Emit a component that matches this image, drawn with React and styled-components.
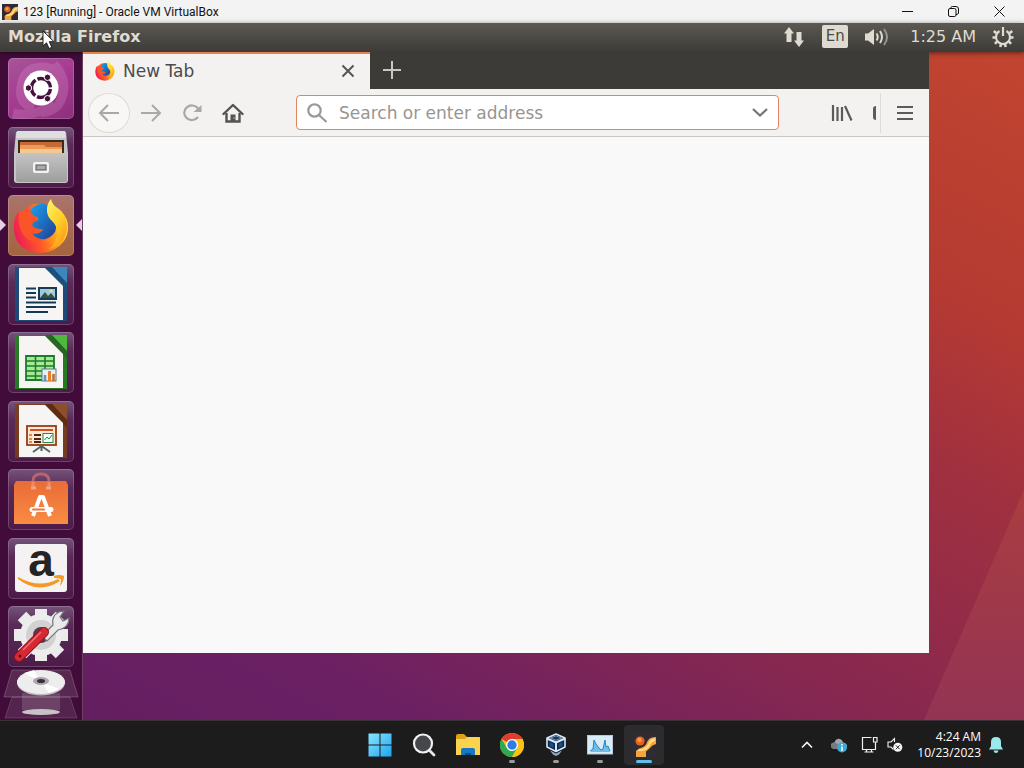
import React from "react"
import styled, { createGlobalStyle, css } from "styled-components"

const ubuntuFont = `"DejaVu Sans", "Noto Sans", sans-serif`
const windowsFont = `"Open Sans", "Noto Sans", sans-serif`

function App() {
  return (
    <>
      <GlobalStyle />
      <Page>
        <VmTitleBar />
        <UnityPanel />
        <Desktop>
          <Launcher />
          <FirefoxWindow />
        </Desktop>
        <Taskbar />
      </Page>
    </>
  )
}

export default App

function VmTitleBar() {
  return (
    <TitleBar>
      <VmIcon size={16} />
      <VmTitle>123 [Running] - Oracle VM VirtualBox</VmTitle>
      <WindowButton aria-label="Minimize">
        <svg width="11" height="11" viewBox="0 0 11 11" stroke="#111" fill="none">
          <path d="M0 5.500H11" />
        </svg>
      </WindowButton>
      <WindowButton aria-label="Restore">
        <svg width="11" height="11" viewBox="0 0 11 11" stroke="#111" fill="none">
          <rect x="0.5" y="2.5" width="7.5" height="8" rx="1.5" />
          <path d="M2.800 2.500V1.800Q3 .5 4.500 .5H8Q10.500 .5 10.500 3V7Q10.400 8.400 8 8.600" />
        </svg>
      </WindowButton>
      <WindowButton aria-label="Close">
        <svg width="11" height="11" viewBox="0 0 11 11" stroke="#111" fill="none">
          <path d="M.5 .5L10.500 10.500M10.500 .5L.5 10.500" />
        </svg>
      </WindowButton>
    </TitleBar>
  )
}

function UnityPanel() {
  return (
    <Panel>
      <AppName>Mozilla Firefox</AppName>
      <Indicators>
        <PanelButton aria-label="Network">
          <svg width="24" height="22" viewBox="0 0 24 22" fill="#dfdbd2">
            <path d="M7 1L12 7.500H9.500V16H4.500V7.500H2Z" />
            <path d="M17 21L12 14.500H14.500V6H19.500V14.500H22Z" />
          </svg>
        </PanelButton>
        <PanelButton aria-label="Keyboard layout">
          <Language>En</Language>
        </PanelButton>
        <PanelButton aria-label="Sound">
          <svg width="26" height="20" viewBox="0 0 26 20" fill="none" stroke="#dfdbd2" strokeWidth="2">
            <path d="M1 6.500H4L10 2V18L4 13.500H1Z" fill="#dfdbd2" stroke="none" />
            <path d="M12.500 6.500Q15 10 12.500 13.500" />
            <path d="M16 4Q20 10 16 16" />
            <path d="M20 2Q26 10 20 18" stroke="#98958d" />
          </svg>
        </PanelButton>
        <PanelClock>1:25 AM</PanelClock>
        <PanelButton aria-label="System">
          <svg width="22" height="22" viewBox="0 0 22 22" fill="none" stroke="#dfdbd2">
            <path d="M7.500 5A7 7 0 1 0 14.500 5" strokeWidth="2.200" />
            <path d="M11 1V10" strokeWidth="2.200" />
            <path
              d="M4.500 7.200L1.800 5M3.500 11.500H.5M5 15.500L3 17.800M9 18L8.300 21M13 18L13.700 21M17 15.500L19 17.800M18.500 11.500H21.500M17.500 7.200L20.200 5"
              strokeWidth="2.600"
            />
          </svg>
        </PanelButton>
      </Indicators>
      <Pointer width="13" height="20" viewBox="0 0 13 20">
        <path
          d="M1 1V16L4.500 12.800L7 18.500L9.800 17.300L7.300 11.700H12Z"
          fill="#fff"
          stroke="#222"
        />
      </Pointer>
    </Panel>
  )
}

const launcherItems = [
  { name: "Search your computer", tone: "dash", icon: <DashIcon /> },
  { name: "Files", icon: <FilesIcon /> },
  { name: "Firefox", tone: "firefox", running: true, icon: <FirefoxTile /> },
  {
    name: "LibreOffice Writer",
    icon: <OfficeIcon dark="#14507f" mid="#1b4f7c" light="#3c87bb"><WriterPage /></OfficeIcon>,
  },
  {
    name: "LibreOffice Calc",
    icon: <OfficeIcon dark="#1f8a1c" mid="#2a6424" light="#4cba3c"><CalcPage /></OfficeIcon>,
  },
  {
    name: "LibreOffice Impress",
    icon: <OfficeIcon dark="#7c3f18" mid="#5e2c12" light="#8b4f2e"><ImpressPage /></OfficeIcon>,
  },
  { name: "Ubuntu Software", icon: <SoftwareIcon /> },
  { name: "Amazon", icon: <AmazonIcon /> },
  { name: "System Settings", icon: <SettingsIcon /> },
]

function Launcher() {
  return (
    <LauncherBar>
      <LauncherList>
        {launcherItems.map((item) => (
          <LauncherItem key={item.name} $running={item.running}>
            <LauncherTile $tone={item.tone} aria-label={item.name}>
              {item.icon}
            </LauncherTile>
          </LauncherItem>
        ))}
      </LauncherList>
      <FoldedTile aria-label="Disc">
        <DiscIcon />
      </FoldedTile>
    </LauncherBar>
  )
}

function FirefoxWindow() {
  return (
    <Browser>
      <TabStrip>
        <Tab>
          <FirefoxLogo size={20} />
          <TabTitle>New Tab</TabTitle>
          <IconButton $width={20} aria-label="Close tab">
            <svg width="14" height="14" viewBox="0 0 14 14" stroke="#555" strokeWidth="2" fill="none">
              <path d="M1.500 1.500L12.500 12.500M12.500 1.500L1.500 12.500" />
            </svg>
          </IconButton>
        </Tab>
        <NewTabButton aria-label="New tab">
          <svg width="18" height="18" viewBox="0 0 18 18" stroke="#c9c8c5" strokeWidth="2" fill="none">
            <path d="M9 0V18M0 9H18" />
          </svg>
        </NewTabButton>
      </TabStrip>
      <Toolbar>
        <BackButton aria-label="Back">
          <svg width="22" height="20" viewBox="0 0 22 20" stroke="#aaa8a6" strokeWidth="2" fill="none">
            <path d="M21 10H2M10 2L2 10L10 18" />
          </svg>
        </BackButton>
        <IconButton $width={42} aria-label="Forward">
          <svg width="22" height="20" viewBox="0 0 22 20" stroke="#aaa8a6" strokeWidth="2" fill="none">
            <path d="M1 10H20M12 2L20 10L12 18" />
          </svg>
        </IconButton>
        <IconButton $width={40} aria-label="Reload">
          <svg width="20" height="18" viewBox="0 0 20 18" stroke="#aaa8a6" strokeWidth="2.200" fill="none">
            <path d="M16 4.500A7.600 7.300 0 1 0 16 13" />
            <path d="M19.500 1V8H11.500Z" fill="#aaa8a6" stroke="none" />
          </svg>
        </IconButton>
        <IconButton $width={42} aria-label="Home">
          <svg width="22" height="20" viewBox="0 0 22 20" stroke="#555350" fill="none">
            <path d="M1.500 11L11 2L20.500 11" strokeWidth="2.400" strokeLinejoin="round" strokeLinecap="round" />
            <path d="M4.500 10V18.500H17.500V10" strokeWidth="2.400" />
            <path d="M8.500 18V11.500H13.500V18Z" fill="#555350" stroke="none" />
            <path d="M11.500 15H12.500" stroke="#fff" />
          </svg>
        </IconButton>
        <AddressBar>
          <svg width="22" height="20" viewBox="0 0 22 20" stroke="#9a9997" strokeWidth="2.200" fill="none">
            <circle cx="8.500" cy="7.500" r="6.200" />
            <path d="M13 12L20.500 19" />
          </svg>
          <AddressInput placeholder="Search or enter address" aria-label="Address" />
          <IconButton $width={18} aria-label="Show history">
            <svg width="16" height="9" viewBox="0 0 16 9" stroke="#777573" strokeWidth="2.200" fill="none">
              <path d="M1 1L8 7.500L15 1" />
            </svg>
          </IconButton>
        </AddressBar>
        <IconButton $width={42} aria-label="Library">
          <svg width="22" height="18" viewBox="0 0 22 18" stroke="#5d5b59" strokeWidth="2.200" fill="none">
            <path d="M2 1V17M6.500 3V17M11 3V17M14 2L20.500 16.500" />
          </svg>
        </IconButton>
        <ClippedButton aria-label="Sidebars">
          <svg width="4" height="14" viewBox="0 0 4 14" fill="#5d5b59">
            <path d="M4 0Q1 0 1 3V11Q1 14 4 14Z" />
          </svg>
        </ClippedButton>
        <MenuButton aria-label="Menu">
          <svg width="16" height="14" viewBox="0 0 16 14" stroke="#5d5b59" strokeWidth="2" fill="none">
            <path d="M0 1H16M0 7H16M0 13H16" />
          </svg>
        </MenuButton>
      </Toolbar>
      <BrowserContent />
    </Browser>
  )
}

function Taskbar() {
  return (
    <TaskbarWrapper>
      <TaskbarApps>
        <TaskButton aria-label="Start">
          <svg width="24" height="24" viewBox="0 0 24 24" fill="url(#start)">
            <defs>
              <linearGradient id="start" x1="0" y1="0" x2="1" y2="1">
                <stop offset="0" stopColor="#8be4ff" />
                <stop offset="1" stopColor="#1ba6ee" />
              </linearGradient>
            </defs>
            <path d="M.5 .5H11.500V11.500H.5ZM12.500 .5H23.500V11.500H12.500ZM.5 12.500H11.500V23.500H.5ZM12.500 12.500H23.500V23.500H12.500Z" />
          </svg>
        </TaskButton>
        <TaskButton aria-label="Search">
          <svg width="24" height="24" viewBox="0 0 24 24" fill="none">
            <circle cx="11" cy="10.500" r="9" fill="#45474b" stroke="#f1f1f1" strokeWidth="2.200" />
            <path d="M17.500 17.500L22 22" stroke="#e8e8e8" strokeWidth="2.800" strokeLinecap="round" />
          </svg>
        </TaskButton>
        <TaskButton aria-label="File Explorer">
          <svg width="26" height="24" viewBox="0 0 26 24">
            <path d="M1 3Q1 1 3 1H9L12 4H24Q25 4 25 5V9H1Z" fill="#dca11a" />
            <path d="M1 6H10L12 4H24Q25 4 25 5V22H1Z" fill="#fbd34e" />
            <path d="M6 22V17Q6 15 8 15H18Q20 15 20 17V22Z" fill="#1677c4" />
            <path d="M10 22V20H16V22Z" fill="#0b4e8c" />
          </svg>
        </TaskButton>
        <TaskButton aria-label="Chrome" $running>
          <svg width="24" height="24" viewBox="0 0 24 24">
            <circle cx="12" cy="12" r="12" fill="#fbc116" />
            <path d="M12 12L1.600 6A12 12 0 0 1 22.400 6Z" fill="#e33b2e" />
            <path d="M1.600 6A12 12 0 0 0 12 24L17.200 15L12 12L6.800 15Z" fill="#2da94f" />
            <path d="M12 6H22.400A12 12 0 0 1 12 24L17.200 15Z" fill="#fbc116" />
            <circle cx="12" cy="12" r="6" fill="#fff" />
            <circle cx="12" cy="12" r="4.700" fill="#2f7ce8" />
          </svg>
        </TaskButton>
        <TaskButton aria-label="VirtualBox" $running>
          <svg width="22" height="24" viewBox="0 0 22 24" strokeLinejoin="round">
            <path d="M11 1L20 5V14L11 18.500L2 14V5Z" fill="#0d2746" stroke="#d7e7f7" strokeWidth="1.600" />
            <path d="M2 5.500L11 9.500L20 5.500M11 9.500V18" fill="none" stroke="#d7e7f7" strokeWidth="2" />
            <path d="M5.500 5L11 2.800L16.500 5L11 7.300Z" fill="#163a61" stroke="#a8c3df" strokeWidth=".7" />
            <path d="M4.500 9L8.500 11V15L4.500 13ZM17.500 9L13.500 11V15L17.500 13Z" fill="#1d4e85" />
            <path d="M5 17.500L11 20.500L17 17.500L14 21.500L11 23L8 21.500Z" fill="#8fa9c6" />
          </svg>
        </TaskButton>
        <TaskButton aria-label="Resource Monitor" $running>
          <svg width="26" height="20" viewBox="0 0 26 20">
            <rect x=".5" y=".5" width="25" height="18.500" fill="#d9edf9" stroke="#bcc9d2" />
            <path d="M4 16L6 14L7 5L9 9L12 13L14 15L16 14L18 5L19 12L21 11L23 16V17H4Z" fill="#71bde9" />
            <path d="M3 16L6 14L7 5L9 9L12 13L14 15L16 14L18 5L19 12L21 11L23 16" fill="none" stroke="#2985bd" />
          </svg>
        </TaskButton>
        <TaskButton aria-label="Virtual machine" $active>
          <VmIcon size={24} />
        </TaskButton>
      </TaskbarApps>
      <Tray>
        <TrayButton $width={32} aria-label="Hidden icons">
          <svg width="12" height="8" viewBox="0 0 12 8" stroke="#f4f4f4" strokeWidth="1.600" fill="none">
            <path d="M1 6.500L6 1.500L11 6.500" />
          </svg>
        </TrayButton>
        <TrayButton $width={32} aria-label="OneDrive">
          <svg width="18" height="16" viewBox="0 0 18 16">
            <path d="M4 12Q1 11 1 8.500Q1 5.500 4.500 5.500Q6 1 10 2Q12.500 2.500 13 5.500Q17 6 17 9Q17 12 14 12Z" fill="#a3a5a6" />
            <path d="M1 8.500Q1 5.500 4.500 5.500Q7 6 14 12H4Q1 11 1 8.500Z" fill="#777b7d" />
            <circle cx="12" cy="10.500" r="5" fill="#37a9dc" />
            <path d="M12 7V8.500M12 9.500V14" stroke="#fff" strokeWidth="1.500" />
          </svg>
        </TrayButton>
        <TrayButton $width={28} aria-label="Network">
          <svg width="17" height="17" viewBox="0 0 17 17" stroke="#f1f1f1" fill="none">
            <path d="M10.500 1.500H1.500V13.500H14.500V8.500M5.500 13.500V16M10.500 13.500V16M3.500 16H12.500" strokeWidth="1.200" />
            <path d="M12.500 1.500H16V6H12.500ZM14.500 6V9" strokeWidth="1.200" />
          </svg>
        </TrayButton>
        <TrayButton $width={24} aria-label="Volume">
          <svg width="16" height="16" viewBox="0 0 16 16" stroke="#f1f1f1" fill="none">
            <path d="M7.500 5V1.500L4 5H1V10H4L6.500 12.500" strokeWidth="1.100" />
            <circle cx="10.800" cy="10.300" r="4.500" fill="#f5f5f5" stroke="none" />
            <path d="M8.900 8.400L12.700 12.200M12.700 8.400L8.900 12.200" stroke="#222" />
          </svg>
        </TrayButton>
        <TrayClock>
          <span>4:24 AM</span>
          <span>10/23/2023</span>
        </TrayClock>
        <TrayButton $width={30} aria-label="Notifications">
          <svg width="14" height="16" viewBox="0 0 14 16" fill="#9ce9ed">
            <path d="M7 0Q12 0 12 5V9L14 12.500H0L2 9V5Q2 0 7 0Z" />
            <path d="M4.500 13.500H9.500Q9 16 7 16T4.500 13.500Z" />
          </svg>
        </TrayButton>
      </Tray>
    </TaskbarWrapper>
  )
}

/* icons */

function VmIcon({ size }) {
  return (
    <svg width={size} height={size} viewBox="0 0 24 24">
      <rect width="24" height="24" fill="#2e2b33" />
      <path
        d="M24 4V11Q20 12 18 15L14 18.500V24H4V18Q6 15 10 14.500Q14 13 15.500 8Q17 5 20 4.500Z"
        fill="#f3a63c"
      />
      <path d="M5 18Q7 16 11 15.500Q15 14 17 9Q18 6 23 5V8Q19 9 18 12Q16 17 10 18Z" fill="#ffdc8a" />
      <circle cx="8" cy="8" r="4.600" fill="#e8621d" />
      <circle cx="7.500" cy="7" r="2.200" fill="#ff9b4a" />
    </svg>
  )
}

function FirefoxLogo({ size }) {
  const id = `fx${size}`
  return (
    <svg width={size} height={size} viewBox="0 0 56 56">
      <defs>
        <linearGradient id={`${id}a`} x1="0" y1=".6" x2="1" y2=".3">
          <stop offset="0" stopColor="#ed1b57" />
          <stop offset=".4" stopColor="#ff5a27" />
          <stop offset=".75" stopColor="#ffb31c" />
          <stop offset="1" stopColor="#ffe64a" />
        </linearGradient>
        <linearGradient id={`${id}b`} x1="0" y1="0" x2="1" y2="1">
          <stop offset="0" stopColor="#18a4f0" />
          <stop offset="1" stopColor="#233a91" />
        </linearGradient>
        <linearGradient id={`${id}c`} x1="0" y1="0" x2=".6" y2="1">
          <stop offset="0" stopColor="#fff36a" />
          <stop offset=".6" stopColor="#ffcf25" />
          <stop offset="1" stopColor="#ff9a1c" />
        </linearGradient>
      </defs>
      <path
        d="M1 31Q0 20 6 13Q6 16 8 18Q12 9 20 6L36 7Q50 12 54 22Q57 34 51 43Q43 54 28 55Q9 54 3 41Q1 36 1 31Z"
        fill={`url(#${id}a)`}
      />
      <path
        d="M17 13Q23 4 32 6Q42 10 43 23Q45 34 37 39Q29 44 21 40Q19 39 17 35Q25 37 30 32Q24 31 20 29Q18 25 22 23Q26 23 25 20Q19 18 17 13Z"
        fill={`url(#${id}b)`}
      />
      <path
        d="M6 15Q12 10 18 15Q20 18 25 19Q25 22 22 23Q18 25 19 29Q23 31 30 31Q27 37 19 35Q23 42 33 41Q22 47 13 40Q4 31 6 15Z"
        fill="#fb5428"
      />
      <path
        d="M38 1Q39 7 46 11Q54 17 54 29Q53 46 36 51Q44 45 44 35Q44 28 40 24Q33 18 34 10Q35 4 38 1Z"
        fill={`url(#${id}c)`}
      />
    </svg>
  )
}

function FirefoxTile() {
  return <FirefoxLogo size={56} />
}

function DashIcon() {
  return (
    <TileSvg viewBox="0 0 66 61">
      <g fill="none" stroke="#e8b5df" strokeWidth="9" opacity=".2">
        <path d="M13 30Q15 8 37 9Q56 12 54 36" />
        <path d="M46 6Q63 24 51 46Q45 54 33 55" />
        <path d="M5 55Q26 60 46 46" />
        <path d="M13 29Q10 46 26 50" />
      </g>
      <circle cx="33" cy="30" r="17.500" fill="#fff" />
      <circle cx="33" cy="30" r="9.500" fill="none" stroke="#43133d" strokeWidth="3.500" strokeDasharray="17.900 2" strokeDashoffset="-1" />
      <g fill="#43133d" stroke="#fff" strokeWidth="1">
        <circle cx="20.500" cy="30" r="3.200" />
        <circle cx="39.500" cy="19.300" r="3.200" />
        <circle cx="39.500" cy="40.700" r="3.200" />
      </g>
    </TileSvg>
  )
}

function FilesIcon() {
  return (
    <TileSvg viewBox="0 0 66 61">
      <defs>
        <linearGradient id="cabinet" x2="0" y2="1">
          <stop offset="0" stopColor="#c4c4c4" />
          <stop offset="1" stopColor="#9d9e9d" />
        </linearGradient>
      </defs>
      <path d="M8 5H58L60 26V53Q60 56 57 56H9Q6 56 6 53V26Z" fill="#c6c6c8" />
      <path d="M9 4H57L58 11H8Z" fill="#dedee0" />
      <path d="M10 13H56V28H10Z" fill="#3a2a20" />
      <path d="M12 15H54V27H12Z" fill="#c56a34" />
      <path d="M12 18H36L38 20H54V27H12Z" fill="#eb9a58" />
      <path d="M12 22H54V27H12Z" fill="#f5c890" />
      <path d="M8 26H59V53Q59 55 57 55H10Q8 55 8 53Z" fill="url(#cabinet)" />
      <rect x="25" y="35" width="16" height="11" rx="2" fill="#f2f2f2" />
      <rect x="28" y="38" width="10" height="5" fill="#aaa" stroke="#555" />
    </TileSvg>
  )
}

function OfficeIcon({ dark, mid, light, children }) {
  return (
    <TileSvg viewBox="0 0 66 61">
      <path d="M7 3H59V57H7Z" fill={dark} opacity=".85" />
      <path d="M37 3H59V27Z" fill={mid} />
      <path d="M44 3H59V19Z" fill={light} />
      <path d="M11 4H37L55 22V56H11Z" fill="#f6f5f3" />
      {children}
    </TileSvg>
  )
}

function WriterPage() {
  return (
    <>
      <path
        d="M18 24.500H28M18 29H28M18 33.500H28M18 38.500H48M18 43H48M18 48H40"
        stroke="#123a56"
        strokeWidth="2.200"
      />
      <rect x="31" y="24" width="17" height="11" fill="#9fcbe2" stroke="#173b54" strokeWidth="2" />
      <path d="M32 34L37 28L40 32L43 29L47 34Z" fill="#36513d" />
      <circle cx="43" cy="27" r="1.500" fill="#f4df79" />
    </>
  )
}

function CalcPage() {
  return (
    <>
      <path d="M18 24H46V48H18Z" fill="#a4eb95" stroke="#1f7a2c" strokeWidth="1.800" />
      <path d="M18 29H46M18 34H46M18 39H46M18 44H46M27.500 24V48M37 24V48" stroke="#1f7a2c" strokeWidth="1.600" />
      <rect x="34" y="37" width="14" height="12" fill="#e9eef2" stroke="#5b7890" />
      <path d="M37 49V43" stroke="#6890b8" strokeWidth="2.500" />
      <path d="M41.500 49V39" stroke="#e98128" strokeWidth="3" />
      <path d="M45.500 49V42" stroke="#c06b28" strokeWidth="2.500" />
    </>
  )
}

function ImpressPage() {
  return (
    <>
      <rect x="19" y="25" width="29" height="19" fill="#fbe9d6" stroke="#973b12" strokeWidth="1.800" />
      <path d="M22 29H45" stroke="#d34f20" strokeWidth="2" />
      <path d="M21 34H24M21 38H24M21 41H24" stroke="#ea8540" strokeWidth="2" />
      <path d="M26 34H33M26 38H33M26 41H33" stroke="#4f2415" strokeWidth="2" />
      <rect x="35" y="32.500" width="10" height="9" fill="#f3fff6" stroke="#27864b" />
      <path d="M36.500 39L39 36L41 38L44 34" fill="none" stroke="#27864b" />
      <path d="M33.500 45L25 51M33.500 45L42 51M33.500 45V50" stroke="#566066" strokeWidth="2" />
    </>
  )
}

function SoftwareIcon() {
  return (
    <TileSvg viewBox="0 0 66 61">
      <defs>
        <linearGradient id="bag" x2="0" y2="1">
          <stop offset="0" stopColor="#e96c36" />
          <stop offset="1" stopColor="#f98c42" />
        </linearGradient>
      </defs>
      <path d="M25 20V12Q25 5 33 5T41 12V20" fill="none" stroke="#b9646a" strokeWidth="3" />
      <path d="M8 12H58L60 16V55H6V16Z" fill="url(#bag)" />
      <path d="M25 19V13M41 13V19" fill="none" stroke="#ee8d6c" strokeWidth="3" />
      <path d="M23 19H28M38 19H43" stroke="#f5a37e" strokeWidth="3" />
      <g fill="none" stroke="#fff">
        <path d="M25 47L32 28H35L42 47" strokeWidth="4" strokeLinejoin="round" />
        <path d="M24 40.500H43" strokeLinecap="round" strokeWidth="5" />
      </g>
      <path d="M25 40.500H36" stroke="#f17736" strokeWidth="2" strokeLinecap="round" />
    </TileSvg>
  )
}

function AmazonIcon() {
  return (
    <TileSvg viewBox="0 0 66 61">
      <rect x="7" y="6" width="52" height="48" rx="3" fill="#f4f2f3" />
      <text x="33" y="38" textAnchor="middle" fontFamily="Liberation Sans, sans-serif" fontWeight="700" fontSize="46" fill="#242424">
        a
      </text>
      <path d="M10 39Q31 51 50 41L52 43Q31 57 10 41Z" fill="#f29a22" />
      <path d="M46 38Q51 36 56 38Q56 43 52 48Q53 44 53 41Q50 40 46 40Z" fill="#f29a22" />
    </TileSvg>
  )
}

function SettingsIcon() {
  return (
    <TileSvg viewBox="0 0 66 61">
      <g stroke="#ebebeb" strokeWidth="12">
        <path d="M33 3V55M6 29H60M14 10L52 48M52 10L14 48" />
      </g>
      <circle cx="33" cy="29" r="21" fill="#ededed" />
      <circle cx="33" cy="29" r="15" fill="#d3d2d3" />
      <circle cx="33" cy="29" r="8" fill="#5d3959" />
      <path
        d="M34 30L45 19Q43 10 51 6L56 5L52 11L55 15L61 12Q61 22 50 24L39 35Z"
        fill="#e9e9e9"
        stroke="#77767a"
        strokeWidth="1.200"
      />
      <path d="M11 51L36 26" stroke="#8c151e" strokeWidth="10" strokeLinecap="round" />
      <path d="M11 51L36 26" stroke="#d72935" strokeWidth="8" strokeLinecap="round" />
      <path d="M15 44L33 26" stroke="#ef7273" strokeWidth="1.500" />
      <circle cx="12" cy="50" r="1.500" fill="#660d16" />
    </TileSvg>
  )
}

function DiscIcon() {
  return (
    <svg width="76" height="53" viewBox="0 0 76 53">
      <path d="M9 3H67L75 30H1Z" fill="#fff" fillOpacity=".12" stroke="#fff" strokeOpacity=".2" />
      <path d="M9 30H67L74 51H2Z" fill="#fff" fillOpacity=".1" stroke="#fff" strokeOpacity=".15" />
      <path d="M19 26H57V43H19Z" fill="#fff" opacity=".14" />
      <ellipse cx="38" cy="16" rx="24" ry="12.500" fill="#bdbbbd" />
      <ellipse cx="38" cy="15" rx="24" ry="12" fill="#eeeded" />
      <path d="M38 15L21 6L31 3ZM38 15L56 22L46 26Z" fill="#fff" />
      <ellipse cx="38" cy="14" rx="8" ry="4" fill="#a9a7aa" />
      <ellipse cx="38" cy="14" rx="4" ry="2" fill="#3f2b40" />
      <ellipse cx="38" cy="45" rx="19" ry="3" fill="#c7c2c5" />
    </svg>
  )
}

const GlobalStyle = createGlobalStyle`
  * {
    box-sizing: border-box;
  }
  body {
    margin: 0;
  }
  svg {
    display: block;
    flex: none;
  }
  button {
    font: inherit;
    padding: 0;
    border: 0;
    background: none;
  }
`

const Page = styled.div`
  min-height: 100vh;
  display: flex;
  flex-direction: column;
`

const TitleBar = styled.header`
  height: 23px;
  display: flex;
  align-items: center;
  padding: 0 2px;
  background: #f3f3f3;
  color: #111;
`

const VmTitle = styled.h1`
  flex: 1;
  margin: 0 0 0 5px;
  font: 12px Roboto, sans-serif;
`

const WindowButton = styled.button`
  width: 46px;
  height: 23px;
  display: grid;
  place-items: center;
`

const Panel = styled.div`
  position: relative;
  z-index: 1;
  height: 29px;
  display: flex;
  align-items: center;
  justify-content: space-between;
  padding: 0 10px 2px 8px;
  background: linear-gradient(180deg, #5b5952 0%, #3c3b37 100%);
  box-shadow: 0 1px 5px rgba(0, 0, 0, 0.5);
  color: #dfdbd2;
  font-family: ${ubuntuFont};
`

const AppName = styled.span`
  font-size: 16px;
  line-height: 27px;
  font-weight: 700;
`

const Indicators = styled.div`
  display: flex;
  align-items: center;
  gap: 16px;
`

const PanelButton = styled.button`
  display: grid;
  place-items: center;
  color: inherit;
`

const Language = styled.span`
  width: 26px;
  border-radius: 2px;
  background: #dfdbd2;
  color: #4c4a45;
  font-size: 15px;
  line-height: 23px;
`

const PanelClock = styled.time`
  margin-left: 4px;
  font-size: 16px;
`

const Pointer = styled.svg`
  position: absolute;
  left: 42px;
  top: 7px;
`

const Desktop = styled.main`
  position: relative;
  flex: 1;
  display: flex;
  background: linear-gradient(
    28deg,
    #621f60 0%,
    #6b2064 18%,
    #88284f 40%,
    #a03040 62%,
    #b53a32 77%,
    #c1452f 100%
  );

  &::before {
    content: "";
    position: absolute;
    right: 0;
    bottom: 0;
    width: 100px;
    height: 230px;
    background: linear-gradient(0deg, #943454, #a93d40);
    clip-path: polygon(100% 0, 100% 100%, 0 100%);
  }
`

const LauncherBar = styled.nav`
  width: 83px;
  display: flex;
  flex-direction: column;
  align-items: center;
  padding-top: 6px;
  border-right: 1px solid #6b4060;
  background: #410b3a;
`

const LauncherList = styled.ul`
  flex: 1;
  align-self: stretch;
  display: flex;
  flex-direction: column;
  justify-content: space-between;
  margin: 0;
  padding: 0;
  list-style: none;
`

const LauncherItem = styled.li`
  position: relative;
  display: flex;
  justify-content: center;

  ${(props) =>
    props.$running &&
    css`
      &::before,
      &::after {
        content: "";
        position: absolute;
        top: 24px;
        border: 6px solid transparent;
      }
      &::before {
        left: 0;
        border-left-color: #e5cfe1;
        border-right-width: 0;
      }
      &::after {
        right: 0;
        border-right-color: #e5cfe1;
        border-left-width: 0;
      }
    `}
`

const tileBackgrounds = {
  dash: "linear-gradient(150deg, #a75598 0%, #a63c92 45%, #8d2f7c 100%)",
  firefox: "linear-gradient(180deg, #a9746e 0%, #a4643d 100%)",
}

const LauncherTile = styled.button`
  width: 66px;
  height: 61px;
  display: grid;
  place-items: center;
  border-radius: 5px;
  box-shadow: inset 0 0 0 1px rgba(255, 255, 255, 0.18);
  background: ${(props) =>
    tileBackgrounds[props.$tone] ||
    "linear-gradient(180deg, #75547a 0%, #5a2b58 30%, #4e1b49 100%)"};
`

const TileSvg = styled.svg`
  width: 66px;
  height: 61px;
  overflow: visible;
`

const FoldedTile = styled.button`
  height: 53px;
`

const Browser = styled.section`
  position: relative;
  z-index: 2;
  flex: 1;
  display: flex;
  flex-direction: column;
  margin: 0 95px 67px 0;
  font-family: ${ubuntuFont};
`

const TabStrip = styled.div`
  height: 37px;
  display: flex;
  background: #3c3b37;
`

const Tab = styled.div`
  width: 287px;
  display: flex;
  align-items: center;
  padding: 0 12px 2px;
  border-top: 2px solid #e8804f;
  background: #f4f2f1;
`

const TabTitle = styled.span`
  flex: 1;
  margin-left: 8px;
  color: #4c4c4c;
  font-size: 17px;
  line-height: 20px;
`

const IconButton = styled.button`
  width: ${(props) => props.$width}px;
  flex: none;
  display: grid;
  place-items: center;
`

const NewTabButton = styled(IconButton).attrs({ $width: 43 })`
  height: 35px;
`

const Toolbar = styled.div`
  height: 48px;
  display: flex;
  align-items: center;
  padding-left: 5px;
  border-bottom: 1px solid #c9c7c5;
  background: #f4f2f1;
`

const BackButton = styled(IconButton).attrs({ $width: 42 })`
  height: 40px;
  border: 1px solid #dedad6;
  border-radius: 50%;
  background: #f9f7f5;
`

const AddressBar = styled.div`
  flex: 1;
  height: 35px;
  display: flex;
  align-items: center;
  margin: 0 42px;
  padding: 0 9px;
  border: 1px solid #e38460;
  border-radius: 4px;
  background: #fff;
`

const AddressInput = styled.input`
  flex: 1;
  min-width: 0;
  height: 30px;
  margin-left: 11px;
  padding: 0;
  border: 0;
  outline: 0;
  background: none;
  color: #333;
  font: 17px ${ubuntuFont};

  &::placeholder {
    color: #979593;
    opacity: 1;
  }
`

const ClippedButton = styled(IconButton).attrs({ $width: 17 })`
  padding-left: 5px;
`

const MenuButton = styled(IconButton).attrs({ $width: 49 })`
  height: 40px;
  border-left: 1px solid #dddad7;
`

const BrowserContent = styled.div`
  flex: 1;
  background: #f9f9f9;
`

const TaskbarWrapper = styled.footer`
  height: 48px;
  display: grid;
  grid-template-columns: 1fr auto 1fr;
  align-items: center;
  border-top: 1px solid #39303a;
  background: #1c1c1c;
  color: #fff;
  font-family: ${windowsFont};
`

const TaskbarApps = styled.div`
  grid-column: 2;
  display: flex;
  gap: 4px;
`

const TaskButton = styled.button`
  position: relative;
  width: 40px;
  height: 40px;
  display: grid;
  place-items: center;
  border-radius: 4px;
  background: ${(props) => (props.$active ? "#2c2c2e" : "none")};

  &::after {
    content: "";
    position: absolute;
    bottom: 2px;
    width: ${(props) => (props.$active ? 16 : 6)}px;
    height: 3px;
    border-radius: 2px;
    background: ${(props) =>
      props.$active ? "#5cc1ee" : props.$running ? "#9b9b9b" : "none"};
  }
`

const Tray = styled.div`
  display: flex;
  align-items: center;
  justify-content: flex-end;
  padding-right: 13px;
`

const TrayButton = styled.button`
  width: ${(props) => props.$width}px;
  display: grid;
  place-items: center;
`

const TrayClock = styled.time`
  display: flex;
  flex-direction: column;
  align-items: flex-end;
  margin-left: 10px;
  font-size: 12px;
  line-height: 16px;
`
